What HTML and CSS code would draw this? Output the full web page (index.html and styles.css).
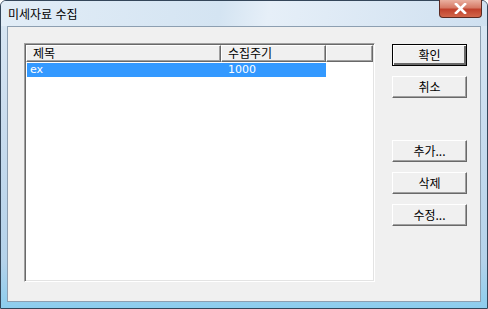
FILE: index.html
```html
<!DOCTYPE html>
<html lang="ko">
<head>
  <meta charset="UTF-8">
  <title>미세자료 수집</title>
  <link rel="stylesheet" href="styles.css">
</head>
<body>
  <div class="window">
    <div class="titlebar">
      <span class="title">미세자료 수집</span>
      <button class="close" type="button">
        <svg width="13" height="11" viewBox="0 0 13 11">
          <path d="M2 1 L11 10 M11 1 L2 10" stroke="#fff" stroke-width="2.6" stroke-linecap="square"/>
        </svg>
      </button>
    </div>
    <div class="client">
      <div class="listbox">
        <div class="header">
          <div class="col col-name">제목</div>
          <div class="col col-period">수집주기</div>
          <div class="col col-rest"></div>
        </div>
        <div class="row selected">
          <span class="cell cell-name">ex</span>
          <span class="cell cell-period">1000</span>
        </div>
      </div>
      <div class="buttons">
        <button class="btn default" type="button">확인</button>
        <button class="btn" type="button">취소</button>
        <button class="btn spaced" type="button">추가...</button>
        <button class="btn" type="button">삭제</button>
        <button class="btn" type="button">수정...</button>
      </div>
    </div>
  </div>
</body>
</html>
```

FILE: styles.css
```css
body {
  margin: 0;
  background: #fff;
  font-family: "Noto Sans CJK KR", "DejaVu Sans", sans-serif;
  font-size: 12px;
}
.window {
  width: 488px;
  height: 309px;
  box-sizing: border-box;
  border: 1px solid #34465a;
  border-radius: 6px 6px 0 0;
  background: linear-gradient(to bottom, #dbe8f4 0%, #c9dcee 40%, #b4d2ea 85%, #8ccdee 100%);
  display: flex;
  flex-direction: column;
  padding: 0 6px 6px 6px;
}
.titlebar {
  height: 25px;
  display: flex;
  justify-content: space-between;
  align-items: flex-start;
  margin: 0 -6px;
  background: linear-gradient(100deg, #e2edf7 0%, #d4e4f2 45%, #e6eff8 55%, #cfe0f0 100%);
  border-radius: 5px 5px 0 0;
}
.title {
  padding: 5px 0 0 7px;
  color: #000;
  font-size: 12px;
  line-height: 16px;
}
.close {
  width: 43px;
  height: 18px;
  margin: -1px 5px 0 0;
  padding: 0;
  border: 1px solid #5a2a22;
  border-top: none;
  border-radius: 0 0 4px 4px;
  background: linear-gradient(to bottom, #eab0a0 0%, #d67a66 45%, #c0412c 55%, #d2664a 100%);
  display: flex;
  align-items: center;
  justify-content: center;
}
.client {
  flex: 1;
  border: 1px solid #8d9fb1;
  background: #f0f0f0;
  display: flex;
  align-items: flex-start;
  padding: 16px 0 0 16px;
}
.listbox {
  width: 351px;
  height: 239px;
  box-sizing: border-box;
  background: #fff;
  border: 1px solid;
  border-color: #a0a0a0 #fff #fff #a0a0a0;
  box-shadow: inset 1px 1px #696969, inset -1px -1px #e3e3e3;
  padding: 1px;
}
.header {
  display: flex;
  height: 17px;
}
.col {
  box-sizing: border-box;
  height: 17px;
  background: #f0f0f0;
  border: 1px solid;
  border-color: #fff #696969 #696969 #fff;
  box-shadow: inset -1px -1px #a0a0a0;
  line-height: 14px;
  padding-left: 6px;
  color: #000;
}
.col-name {
  width: 195px;
}
.col-period {
  width: 105px;
}
.col-rest {
  width: 47px;
}
.row {
  display: flex;
  height: 14px;
  margin: 1px 0 0 1px;
  line-height: 14px;
  font-family: "DejaVu Sans", "Liberation Sans", sans-serif;
  font-size: 11px;
  width: 299px;
}
.row.selected {
  background: #3399ff;
  color: #fff;
}
.cell-name {
  width: 198px;
  padding-left: 3px;
}
.buttons {
  display: flex;
  flex-direction: column;
  gap: 10px;
  margin-left: 17px;
  padding-top: 1px;
}
.btn {
  width: 75px;
  height: 22px;
  box-sizing: border-box;
  padding: 0;
  background: #f0f0f0;
  border: 1px solid;
  border-color: #fff #696969 #696969 #fff;
  box-shadow: inset -1px -1px #a0a0a0;
  font-family: "Noto Sans CJK KR", sans-serif;
  font-size: 12px;
  color: #000;
  line-height: 18px;
}
.btn.default {
  border: 1px solid #000;
  box-shadow: inset 1px 1px #fff, inset -2px -2px #696969;
}
.btn.spaced {
  margin-top: 32px;
}
```
